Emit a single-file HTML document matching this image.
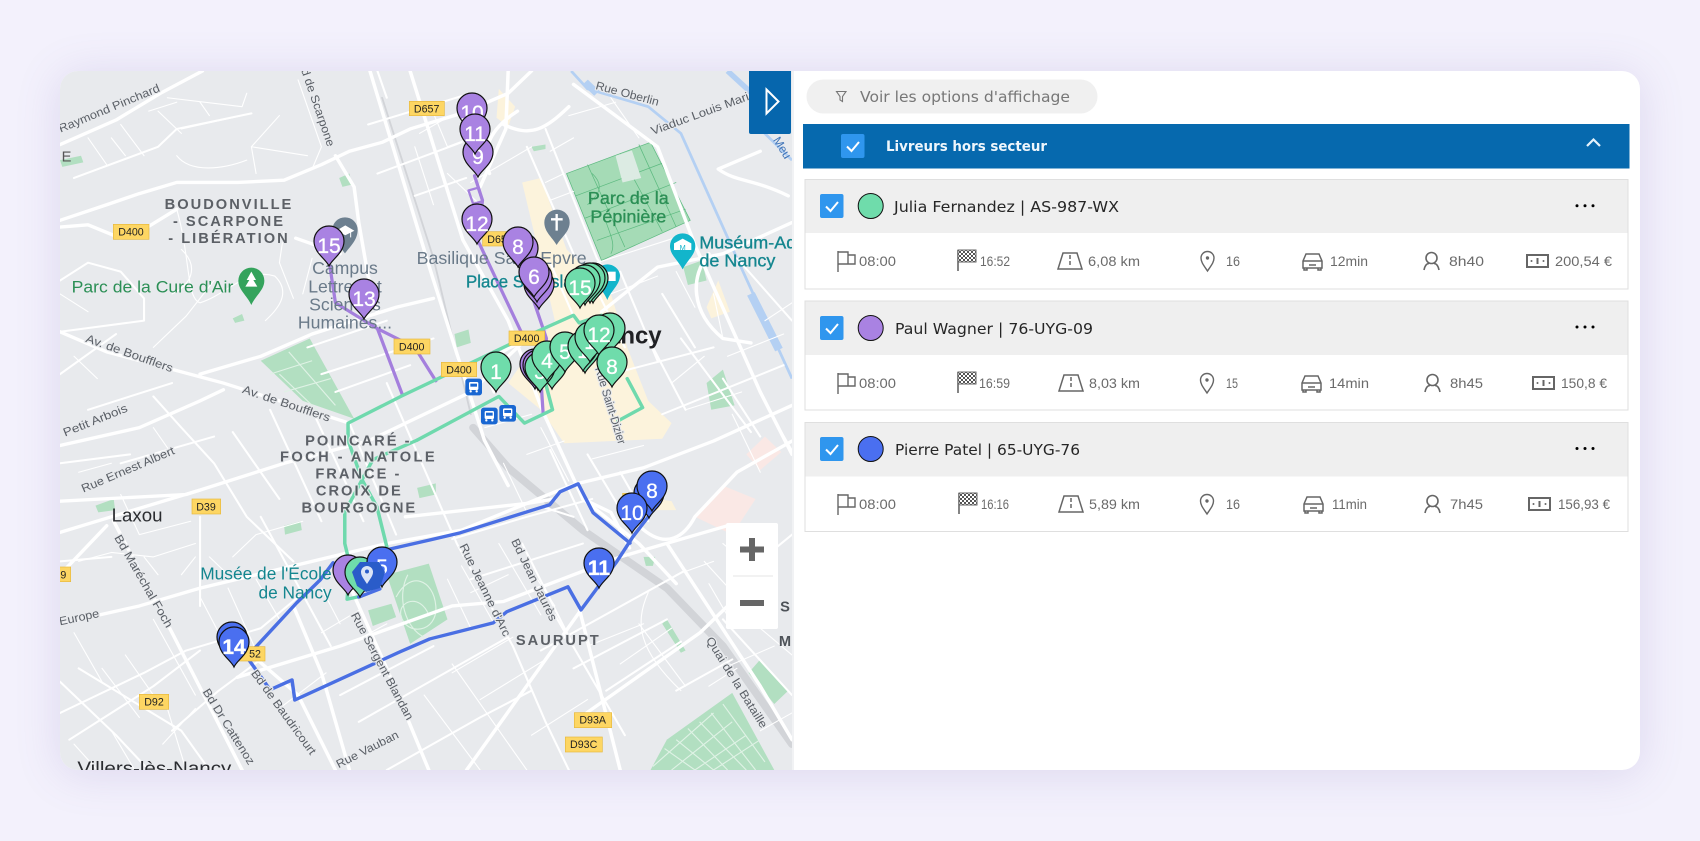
<!DOCTYPE html>
<html lang="fr"><head><meta charset="utf-8"><title>Livreurs</title>
<style>
html,body{margin:0;padding:0;width:1700px;height:841px;overflow:hidden;background:#f3f1fc}
#card{position:absolute;left:60px;top:71px;width:1580px;height:699px;border-radius:18px;background:#fff;box-shadow:0 4px 44px rgba(110,90,170,.17)}
svg{position:absolute;left:0;top:0;filter:blur(.35px)}
.m text,.lbl{font-family:"Liberation Sans",sans-serif}
.ui{font-family:"DejaVu Sans","Liberation Sans",sans-serif}
.rw{fill:none;stroke:#fff;stroke-linejoin:round;stroke-linecap:round}
.a{stroke-width:7.5}.b{stroke-width:4.5}.c{stroke-width:2.4}
.stat{font-family:"Liberation Sans",sans-serif;font-size:14px;fill:#6b6b6b}
.name{font-size:15px;fill:#262626}
.ic{fill:none;stroke:#666;stroke-width:1.4}
.sh{paint-order:stroke;stroke:#e8eaed;stroke-width:7px;stroke-linejoin:round}
.road{font-size:35px;fill:#5a5f66}
.hood{font-size:44px;fill:#4d5258;letter-spacing:6px;font-weight:bold;text-anchor:middle;opacity:.9}
.poi{font-size:53px;fill:#6a7a89}
.teal{font-size:52px;fill:#14868f}
.grn{font-size:50px;fill:#2b8f55}
.shd{fill:#fdd663;stroke:#e6b93f;stroke-width:2}
.shdt{font-size:32px;fill:#222;text-anchor:middle}
.m text{font-size:21px;fill:#fff;text-anchor:middle;stroke:#fff;stroke-width:.3px}
</style></head><body>
<div id="card"></div>
<svg width="1700" height="841" viewBox="0 0 1700 841" xmlns="http://www.w3.org/2000/svg">
<defs>
<clipPath id="mc"><path d="M78 71H792V770H78A18 18 0 0 1 60 752V89A18 18 0 0 1 78 71Z"/></clipPath>
<path id="pin" d="M0 0C-3-7-15-13-15-25A15 15 0 1 1 15-25C15-13 3-7 0 0Z" stroke="#111" stroke-width="1.2"/>
<pattern id="chk" width="4" height="4" patternUnits="userSpaceOnUse"><rect width="4" height="4" fill="#fff"/><rect width="2" height="2" fill="#555"/><rect x="2" y="2" width="2" height="2" fill="#555"/></pattern>
<g id="flag" class="ic"><path d="M1-10V11M1-9H11V3H1M11-6H18V3H11"/></g>
<g id="fin"><path d="M1-11V10" stroke="#666" stroke-width="1.6"/><rect x="1" y="-11" width="18" height="12" fill="url(#chk)" stroke="#666" stroke-width="1"/></g>
<g id="road" class="ic"><path d="M1 8H25L20-8H6ZM13-6V-2M13 0V4" stroke-width="1.5"/></g>
<g id="loc" class="ic"><path d="M0 10C-4 4-6.500 1-6.500-3A6.500 6.500 0 0 1 6.500-3C6.500 1 4 4 0 10Z"/><circle cy="-3" r="1" fill="#666"/></g>
<g id="car" class="ic"><path d="M1 7V0L4-7H17L20 0V7ZM1 0H20M2 7V9H5V7M16 7V9H19V7M7 4H14" stroke-width="1.5"/></g>
<g id="usr" class="ic"><circle cx="8.500" cy="-3" r="5.500" stroke-width="1.6"/><path d="M1 9C2 4 4 2.500 6 2.500M16 9C15 4 13 2.500 11 2.500" stroke-width="1.6"/></g>
<g id="mon"><rect x="1" y="-6" width="21" height="12" fill="none" stroke="#666" stroke-width="2"/><rect x="10.500" y="-3" width="2" height="6" fill="#666"/><circle cx="5.500" r="1" fill="#666"/><circle cx="17.500" r="1" fill="#666"/></g>
<g id="cb"><rect width="23.500" height="24" rx="2" fill="#2f96ee"/><path d="M6 12.500L10.500 17L18 8" fill="none" stroke="#fff" stroke-width="2"/></g>
</defs>

<g clip-path="url(#mc)">
<rect x="60" y="71" width="732" height="699" fill="#e8eaed"/>

<!-- overview coordinate space -->
<g transform="translate(60,71) scale(.46684,.44579)">
<!-- land use -->
<path d="M990 250L1030 240L1085 400L1180 500L1215 620L1260 740L1310 790L1290 825L1080 835L1030 760L960 700L1000 640L1060 560Z" fill="#fcf3dc"/>
<path d="M940 40L975 80L960 125L935 105ZM1385 530L1410 470L1435 540L1395 555ZM1240 955L1310 965L1320 985L1270 985Z" fill="#fcf3dc"/>
<path d="M1360 1000L1420 930L1490 960L1440 1040ZM1470 860L1510 820L1545 855L1500 895Z" fill="#fae8e5"/>
<g fill="#b2dfc1">
<path d="M1085 230L1265 160L1350 335L1160 425Z" fill="#a5dbb6"/>
<path d="M430 650L535 600L630 780L520 740Z"/>
<path d="M700 1130L790 1105L830 1230L750 1285Z"/>
<path d="M1265 1568L1300 1500L1440 1395L1530 1568Z"/>
<path d="M1475 1350L1500 1320L1560 1390L1530 1420Z"/>
<path d="M660 1210L710 1195L720 1225L670 1245ZM76 975L115 960L118 985L82 990ZM480 1020L515 1010L518 1030L482 1040ZM765 935L805 925L805 950L770 958ZM0 200L45 190L50 205L5 215ZM598 240L620 230L625 255L605 260ZM1010 170L1040 165L1040 175L1015 180ZM1385 700L1420 670L1445 750L1395 760ZM1335 440L1375 425L1385 470L1345 480ZM845 590L875 580L880 610L850 620ZM370 555L390 545L395 560L375 565Z"/>
<path d="M1290 1240L1300 1230L1340 1300L1330 1305ZM1250 1090L1275 1090L1270 1110L1255 1110Z"/>
</g>
<!-- pepiniere lines -->
<g fill="none" stroke="#5dba80" stroke-width="1.600">
<path d="M1085 230L1265 160L1350 335L1160 425ZM1130 210L1210 395M1200 185L1290 360M1240 165L1320 350M1105 280L1295 205M1125 330L1320 250M1150 380L1340 310M1140 230C1170 260 1150 280 1130 300M1170 340C1180 370 1190 390 1180 410"/>
</g>
<path d="M1190 190L1225 178L1245 240L1205 250Z" fill="#dcebe3"/>
<!-- park lines -->
<g fill="none" stroke="#dff2e5" stroke-width="2.500">
<path d="M720 1180C750 1120 800 1140 805 1200C810 1260 740 1270 730 1220C725 1190 770 1170 790 1220M745 1130C720 1180 740 1250 780 1270M1270 1560L1400 1440M1310 1568L1440 1460M1360 1568L1470 1490M1320 1500L1400 1568M1370 1460L1470 1568M1420 1420L1510 1550M1295 1520L1360 1568M1345 1475L1430 1568M1395 1440L1490 1568M1400 1568L1500 1500M470 680L560 770M490 630L590 750M450 680L540 650M480 720L580 690"/>
</g>
<!-- water -->
<g fill="none" stroke="#b4d0f3" stroke-linejoin="round">
<path d="M1095 0L1130 40L1260 80L1330 140L1450 420L1568 690" stroke-width="6"/>
<path d="M1125 25L1150 50" stroke-width="16"/>
<path d="M1480 500L1540 625" stroke-width="18"/>
<path d="M1430 0L1482 50" stroke-width="12"/>
<path d="M1500 130L1568 200" stroke-width="6"/>
</g>
<!-- rail -->
<g fill="none" stroke="#d2d4d8" stroke-linejoin="round" stroke-linecap="round">
<path d="M690 60L800 420L880 770" stroke-width="4"/>
<path d="M885 800L960 890L1120 1030L1300 1160L1420 1290L1568 1510" stroke-width="17"/>
</g>
<!-- roads thick -->
<g class="rw a">
<path d="M0 165L120 110L215 50L305 0"/>
<path d="M0 335L100 300L170 275L250 250L380 250L480 245L560 210L620 180L690 160L750 130L860 95L960 50L1010 0"/>
<path d="M0 350L60 345L130 375L180 355L250 310"/>
<path d="M505 375L600 410"/>
<path d="M590 190L630 260L640 340L660 460L680 540"/>
<path d="M664 0L793 446L909 828L960 930"/>
<path d="M750 0L863 379L960 560L1034 763L1120 960L1240 1060L1320 1150"/>
<path d="M960 0L955 130L900 260"/>
<path d="M1100 30L1280 170L1360 390L1500 720L1568 860"/>
<path d="M0 585L100 630L350 700L620 790"/>
<path d="M300 680L430 640L540 590L720 530L800 510"/>
<path d="M0 840L170 800L300 740L350 715"/>
<path d="M0 965L270 950L480 880L660 830L880 720L1000 600"/>
<path d="M0 1240L170 1200L300 1160L580 1090L700 1060L860 1030L1070 940L1110 925L1250 890L1400 830L1568 750"/>
<path d="M115 1010L240 1260L390 1568"/>
<path d="M0 1035L110 1000L300 940"/>
<path d="M100 1020L0 1130"/>
<path d="M610 1130L700 1340L790 1568"/>
<path d="M380 1360L600 1290L840 1200L950 1190L1200 1090L1430 1020"/>
<path d="M400 1300L510 1400L590 1568"/>
<path d="M500 1200L560 1350L620 1568"/>
<path d="M871 1568L1116 1209"/>
<path d="M1113 1209L1200 1568"/>
<path d="M1128 1440L1371 1260L1450 1180"/>
<path d="M980 90C920 130 900 180 920 230M950 120C1010 150 1040 130 1090 80"/>
<path d="M1240 1020C1300 1080 1340 1040 1360 1000L1450 900L1568 830"/>
<path d="M1040 600C950 610 900 650 930 720"/>
<path d="M1220 1070L1180 990L1120 960"/>
<path d="M1160 540L1280 440L1420 410L1568 340"/>
<path d="M1390 410C1350 460 1350 540 1420 600L1480 610M1500 180L1410 220C1450 250 1480 240 1560 280"/>
<path d="M740 1000L1000 970L1060 960"/>
<path d="M1300 1060L1500 1380L1568 1500"/>
</g>
<!-- roads medium -->
<g class="rw b">
<path d="M30 240L210 170L250 130M250 130L410 95"/>
<path d="M0 585L180 560L180 510L130 450L60 430L0 470"/>
<path d="M200 730L260 800L330 880L400 1000L500 1100"/>
<path d="M0 1440L180 1350L270 1300L430 1250L510 1180"/>
<path d="M240 1480L340 1390L430 1320"/>
<path d="M0 1370L120 1490L190 1568"/>
<path d="M20 1500L200 1380L300 1300"/>
<path d="M40 1340L260 1480L320 1568"/>
<path d="M300 1000L300 1200M430 1000L580 1290"/>
<path d="M700 700L800 940L850 1060L970 1290L1040 1460L1090 1568"/>
<path d="M990 1060L1100 1290M1060 1220L1210 1490"/>
<path d="M600 1400L800 1290M640 1460L960 1270M700 1568L900 1450L1010 1390"/>
<path d="M1030 1300L1340 1120M1100 1340L1300 1230M1170 1390L1330 1280"/>
<path d="M840 1050L1000 1000L1140 960M880 1140L1120 1060"/>
<path d="M0 680L120 590M60 760L240 700M130 880L330 820M0 880L150 860"/>
<path d="M370 810L470 960M450 760L560 1010M540 760L650 1010M620 790L720 1040"/>
<path d="M530 620L700 560M560 680L800 600M590 720L750 660"/>
<path d="M660 120L880 50M680 230L860 160M760 280L870 240M700 60L680 0"/>
<path d="M1040 130L1150 420L1180 470M1000 170L1100 410"/>
<path d="M1050 430L1100 550M1140 470L1210 620M1200 450L1280 650"/>
<path d="M1180 680L1400 620M1290 770L1550 660M1330 600L1480 810M1450 420L1568 560"/>
<path d="M1290 500L1360 620M1260 600L1340 760M1420 690L1500 820"/>
<path d="M1050 850L1130 1030M1130 860L1210 1000M1200 900L1260 1010"/>
<path d="M1040 980L1100 1000M0 1100L110 1090"/>
<path d="M1420 1230L1568 1400M1440 1150L1568 1040M1320 1390L1440 1320"/>
</g>
<!-- roads thin -->
<g class="rw c">
<path d="M60 150L100 210M110 150L140 190M130 120L180 190M190 90L250 70M210 90L260 140M230 60L390 80L400 50M300 70L320 100M260 130L390 100"/>
<path d="M470 100L410 170L420 230M510 20L560 170L540 220M410 170L530 190M250 190C280 230 350 220 400 200"/>
<path d="M250 310C280 420 270 510 300 520C360 500 400 440 460 460C500 500 460 540 440 560"/>
<path d="M260 400C300 440 280 480 240 500M330 470L270 550L200 620M480 360L470 430L500 510M540 420L520 500"/>
<path d="M0 500L60 540M30 640L80 690M200 800L240 860M40 900L110 880M130 950L170 1040L280 1010"/>
<path d="M40 1100L110 1080L200 1090L290 1060M180 1090L210 1130M260 1130L290 1090M320 1090L360 1130M370 1090L420 1040L520 1010"/>
<path d="M300 1180L370 1320M360 1160L420 1300M420 1140L470 1230M200 1230L290 1400M140 1310L220 1430M90 1340L170 1450M30 1260L90 1370"/>
<path d="M30 1510L80 1568M110 1480L160 1568M220 1510L290 1430M230 1430L270 1568"/>
<path d="M470 1430L570 1350M600 1240L560 1160M630 1280L700 1240M560 1260L640 1210"/>
<path d="M840 1350L970 1270M900 1410L1040 1320M1010 1490L1130 1410M780 1400L900 1568M840 1330L1000 1568"/>
<path d="M860 1110L930 1240M830 1140L880 1250M940 1060L1030 1220M1010 1120L1060 1200M880 1170L960 1130"/>
<path d="M1240 1240L1340 1380M1260 1170C1230 1240 1240 1300 1330 1390M1130 1290L1250 1240M1200 1330L1310 1250"/>
<path d="M1380 1100L1450 1180M1420 1060L1500 1130M1320 1130L1400 1100M1390 1380L1450 1340M1390 1150L1440 1240"/>
<path d="M1420 1340L1530 1290M1500 1250L1568 1310M1500 1480L1568 1440"/>
<path d="M1400 500L1420 600M1310 700L1380 640M1340 760L1460 720M1440 770L1500 900M1510 560L1568 520M1430 640L1550 590M1530 780L1568 850"/>
<path d="M790 70L830 170L880 150M820 110L770 140M760 170L800 300M830 230L900 300M860 90L880 50"/>
<path d="M1090 100L1190 70M1180 60L1240 150M1100 150L1050 180M1040 250L1080 230M880 250L1010 170"/>
<path d="M1050 290L1100 270M1150 430L1330 370M1180 500L1280 460M1320 450L1360 530"/>
<path d="M1000 860L1080 830M910 800L1010 770M1030 800L1090 920M950 880L1000 990M1140 870L1250 840"/>
</g>
<!-- routes -->
<g fill="none" stroke-linejoin="round" stroke-linecap="round">
<g stroke="#a47fdd" stroke-width="7">
<path d="M577 430L590 520L680 578L760 620L805 695"/>
<path d="M680 578L733 725"/>
<path d="M888 235L905 290L895 380L990 590"/>
<path d="M875 268L895 262L905 292L885 298Z" stroke-width="5"/>
<path d="M1000 470L1042 600L1030 690L1035 770"/>
</g>
<g stroke="#6fd9ad" stroke-width="7.500">
<path d="M617 1090L610 1060L610 990L647 917L617 828V790L730 730L1010 590L1100 548L1112 565L1160 548"/>
<path d="M765 828L670 872L647 917L679 978L700 1067"/>
<path d="M765 828L940 730L995 790L1055 760L1040 700"/>
<path d="M1215 690L1248 755L1195 785"/>
<path d="M617 1160L615 1185L645 1178"/>
</g>
<g stroke="#4a6fe3" stroke-width="7.500">
<path d="M585 1103L557 1142L507 1193L400 1314L450 1388L497 1366L503 1411L728 1303L792 1274L928 1238L957 1213L1088 1157L1116 1209L1191 1103L1227 1045L1263 996"/>
<path d="M700 1074L792 1052L857 1036L1049 973L1071 944L1110 926L1142 991L1221 1059"/>
<path d="M640 1180L685 1162"/>
</g>
</g>
</g>

<!-- q1 labels -->
<g class="lbl" transform="translate(0,40) scale(.33333)">
<text class="road sh" transform="translate(182,278) rotate(-22.600)" textLength="325" lengthAdjust="spacingAndGlyphs">Raymond Pinchard</text>
<text x="185" y="364" font-size="44" fill="#555">E</text>
<text class="road sh" transform="translate(903,90) rotate(71)" textLength="245" lengthAdjust="spacingAndGlyphs">d de Scarpone</text>
<text class="hood sh" x="687" y="507">BOUDONVILLE</text>
<text class="hood sh" x="687" y="558">- SCARPONE</text>
<text class="hood sh" x="687" y="609">- LIBÉRATION</text>
<text class="grn" x="215" y="758" textLength="485" lengthAdjust="spacingAndGlyphs">Parc de la Cure d'Air</text>
<path d="M754 795C740 765 715 750 715 722A39 39 0 0 1 793 722C793 750 768 765 754 795Z" fill="#34a35c"/>
<path d="M754 695L768 720H760L772 740H736L748 720H740Z" fill="#fff"/>
<path d="M1035 640C1020 620 997 600 997 570A38 38 0 0 1 1073 570C1073 600 1050 620 1035 640Z" fill="#6d8090"/>
<path d="M1012 572L1036 558L1060 572L1036 584ZM1052 574V592" fill="#fff" stroke="#fff" stroke-width="3"/>
<g class="poi" text-anchor="middle"><text x="1035" y="702">Campus</text><text x="1035" y="757">Lettres et</text><text x="1035" y="812">Sciences</text><text x="1035" y="866">Humaines...</text></g>
<text class="road sh" transform="translate(255,905) rotate(19.500)" textLength="275" lengthAdjust="spacingAndGlyphs">Av. de Boufflers</text>
<text class="road sh" transform="translate(725,1058) rotate(18.500)" textLength="275" lengthAdjust="spacingAndGlyphs">Av. de Boufflers</text>
<text class="road sh" transform="translate(195,1190) rotate(-22)" textLength="205" lengthAdjust="spacingAndGlyphs">Petit Arbois</text>
<rect class="shd" x="340" y="553" width="107" height="45"/><text class="shdt" x="393" y="586">D400</text>
<rect class="shd" x="1182" y="897" width="108" height="45"/><text class="shdt" x="1235" y="931">D400</text>
</g>
<!-- q2 labels -->
<g class="lbl" transform="translate(400,40) scale(.33333)">
<text class="road sh" transform="translate(585,147) rotate(15)" textLength="195" lengthAdjust="spacingAndGlyphs">Rue Oberlin</text>
<text class="road sh" transform="translate(758,285) rotate(-20)" textLength="310" lengthAdjust="spacingAndGlyphs">Viaduc Louis Mari</text>
<text transform="translate(1118,300) rotate(58)" font-size="36" fill="#3f74b8">Meu</text>
<g class="grn" text-anchor="middle" stroke="#2b8f55" stroke-width="1"><text x="685" y="492" style="font-size:54px">Parc de la</text><text x="685" y="547" style="font-size:54px">Pépinière</text></g>
<path d="M470 615C455 590 433 575 433 547A38 38 0 0 1 509 547C509 575 485 590 470 615Z" fill="#6d8090"/>
<path d="M470 522V572M453 538H488" stroke="#fff" stroke-width="7"/>
<path d="M848 688C834 660 810 645 810 618A38 38 0 0 1 886 618C886 645 862 660 848 688Z" fill="#12b5cb"/>
<path d="M822 610L848 596L874 610V630H822Z" fill="#fff"/><text x="848" y="630" font-size="22" fill="#12b5cb" text-anchor="middle">M</text>
<text class="poi" x="50" y="672" textLength="510" lengthAdjust="spacingAndGlyphs">Basilique Saint-Epvre</text>
<text class="teal" x="198" y="742" stroke="#14868f" stroke-width="1" textLength="345" lengthAdjust="spacingAndGlyphs">Place Stanislas</text>
<path d="M622 780C610 750 585 735 585 705A38 38 0 0 1 660 705C660 735 634 750 622 780Z" fill="#12b5cb"/>
<rect x="615" y="695" width="32" height="28" fill="#fff"/>
<text class="teal" x="898" y="625" stroke="#14868f" stroke-width="1" style="font-size:54px">Muséum-Aquarium</text>
<text class="teal" x="898" y="680" stroke="#14868f" stroke-width="1" style="font-size:54px">de Nancy</text>
<text x="785" y="910" text-anchor="end" font-size="72" font-weight="bold" fill="#202124">Nancy</text>
<text class="road sh" transform="translate(585,985) rotate(73)" textLength="240" lengthAdjust="spacingAndGlyphs">Rue Saint-Dizier</text>
<rect class="shd" x="28" y="184" width="105" height="43"/><text class="shdt" x="80" y="217">D657</text>
<rect class="shd" x="248" y="575" width="105" height="43"/><text class="shdt" x="300" y="609">D657</text>
<rect class="shd" x="327" y="873" width="107" height="43"/><text class="shdt" x="380" y="906">D400</text>
<rect class="shd" x="124" y="967" width="106" height="43"/><text class="shdt" x="177" y="1000">D400</text>
<g fill="#1967d2"><rect x="196" y="1016" width="50" height="50" rx="8"/><rect x="243" y="1103" width="50" height="50" rx="8"/><rect x="298" y="1095" width="50" height="50" rx="8"/></g>
<g fill="#fff"><rect x="207" y="1026" width="28" height="24" rx="4"/><rect x="254" y="1113" width="28" height="24" rx="4"/><rect x="309" y="1105" width="28" height="24" rx="4"/><circle cx="212" cy="1054" r="3.500"/><circle cx="230" cy="1054" r="3.500"/><circle cx="259" cy="1141" r="3.500"/><circle cx="277" cy="1141" r="3.500"/><circle cx="314" cy="1133" r="3.500"/><circle cx="332" cy="1133" r="3.500"/></g>
<g fill="#1967d2"><rect x="211" y="1031" width="20" height="9"/><rect x="258" y="1118" width="20" height="9"/><rect x="313" y="1110" width="20" height="9"/></g>
</g>
<!-- q3 labels -->
<g class="lbl" transform="translate(0,440) scale(.33333)">
<g class="hood"><text class="sh" x="1075" y="17">POINCARÉ -</text><text class="sh" x="1075" y="65" textLength="470">FOCH - ANATOLE</text><text class="sh" x="1075" y="116">FRANCE -</text><text class="sh" x="1078" y="167">CROIX DE</text><text class="sh" x="1078" y="218">BOURGOGNE</text></g>
<text class="road sh" transform="translate(250,158) rotate(-23)" textLength="300" lengthAdjust="spacingAndGlyphs">Rue Ernest Albert</text>
<text x="335" y="245" font-size="56" fill="#2a2c30">Laxou</text>
<text class="road sh" transform="translate(342,293) rotate(60)" textLength="315" lengthAdjust="spacingAndGlyphs">Bd Maréchal Foch</text>
<text class="road sh" transform="translate(180,556) rotate(-12)" textLength="122" lengthAdjust="spacingAndGlyphs">Europe</text>
<text class="teal" x="995" y="419" text-anchor="end">Musée de l'École</text>
<text class="teal" x="995" y="475" text-anchor="end">de Nancy</text>
<text class="road sh" transform="translate(752,700) rotate(54)" textLength="305" lengthAdjust="spacingAndGlyphs">Bd de Baudricourt</text>
<text class="road sh" transform="translate(607,755) rotate(58)" textLength="262" lengthAdjust="spacingAndGlyphs">Bd Dr Cattenoz</text>
<text class="road sh" transform="translate(1052,525) rotate(62)" textLength="360" lengthAdjust="spacingAndGlyphs">Rue Sergent Blandan</text>
<text class="road sh" transform="translate(1016,985) rotate(-27)" textLength="205" lengthAdjust="spacingAndGlyphs">Rue Vauban</text>
<text x="232" y="1003" font-size="56" fill="#2a2c30" textLength="462" lengthAdjust="spacingAndGlyphs">Villers-lès-Nancy</text>
<rect class="shd" x="576" y="177" width="86" height="45"/><text class="shdt" x="618" y="211">D39</text>
<rect class="shd" x="150" y="381" width="62" height="44"/><text class="shdt" x="190" y="415">9</text>
<rect class="shd" x="418" y="763" width="88" height="45"/><text class="shdt" x="462" y="797">D92</text>
<rect class="shd" x="710" y="620" width="85" height="43"/><text class="shdt" x="765" y="653">52</text>
</g>
<!-- q4 labels -->
<g class="lbl" transform="translate(400,440) scale(.33333)">
<text class="road sh" transform="translate(178,318) rotate(64)" textLength="305" lengthAdjust="spacingAndGlyphs">Rue Jeanne d'Arc</text>
<text class="road sh" transform="translate(333,303) rotate(64)" textLength="270" lengthAdjust="spacingAndGlyphs">Bd Jean Jaurès</text>
<text class="hood sh" x="475" y="615">SAURUPT</text>
<text class="road sh" transform="translate(917,600) rotate(58)" textLength="315" lengthAdjust="spacingAndGlyphs">Quai de la Bataille</text>
<text x="1155" y="515" font-size="44" font-weight="bold" fill="#4d5258" text-anchor="middle">S</text>
<text x="1155" y="618" font-size="44" font-weight="bold" fill="#4d5258" text-anchor="middle">M</text>
<rect class="shd" x="523" y="818" width="112" height="45"/><text class="shdt" x="578" y="851">D93A</text>
<rect class="shd" x="496" y="891" width="111" height="45"/><text class="shdt" x="551" y="924">D93C</text>
<rect class="shd" x="668" y="160" width="60" height="40"/>
</g>

<!-- markers -->
<g class="m" fill="#a982e2">
<g transform="translate(329,266)"><use href="#pin"/><text y="-13">15</text></g>
<g transform="translate(364,319)"><use href="#pin"/><text y="-13">13</text></g>
<g transform="translate(472,133)"><use href="#pin"/><text y="-13">10</text></g>
<g transform="translate(478,177)"><use href="#pin"/><text y="-13">9</text></g>
<g transform="translate(475,154)"><use href="#pin"/><text y="-13">11</text></g>
<g transform="translate(477,244)"><use href="#pin"/><text y="-13">12</text></g>
<g transform="translate(523,273)"><use href="#pin"/></g>
<g transform="translate(518,267)"><use href="#pin"/><text y="-13">8</text></g>
<g transform="translate(539,309)"><use href="#pin"/></g>
<g transform="translate(537,302)"><use href="#pin"/></g>
<g transform="translate(534,297)"><use href="#pin"/><text y="-13">6</text></g>
<g transform="translate(535,389)"><use href="#pin"/></g>
<g transform="translate(538,390)"><use href="#pin"/></g>
</g>
<g class="m" fill="#6fdcab">
<g transform="translate(593,303)"><use href="#pin"/></g>
<g transform="translate(590,303)"><use href="#pin"/></g>
<g transform="translate(585,305)"><use href="#pin"/></g>
<g transform="translate(580,308)"><use href="#pin"/><text y="-13">15</text></g>
<g transform="translate(496,392)"><use href="#pin"/><text y="-13">1</text></g>
<g transform="translate(552,389)"><use href="#pin"/></g>
<g transform="translate(540,392)"><use href="#pin"/><text y="-13">3</text></g>
<g transform="translate(547,381)"><use href="#pin"/><text y="-13">4</text></g>
<g transform="translate(565,372)"><use href="#pin"/><text y="-13">5</text></g>
<g transform="translate(585,373)"><use href="#pin"/></g>
<g transform="translate(583,371)"><use href="#pin"/><text y="-13">1</text></g>
<g transform="translate(590,362)"><use href="#pin"/><text y="-13">1</text></g>
<g transform="translate(610,353)"><use href="#pin"/></g>
<g transform="translate(599,355)"><use href="#pin"/><text y="-13">12</text></g>
<g transform="translate(612,387)"><use href="#pin"/><text y="-13">8</text></g>
</g>
<g class="m" fill="#a982e2"><g transform="translate(348,595)"><use href="#pin"/></g></g>
<g class="m" fill="#6fdcab"><g transform="translate(360,597)"><use href="#pin"/></g></g>
<g class="m" fill="#4a6ff0">
<g transform="translate(382,587)"><use href="#pin"/><text y="-13">5</text></g>
<g transform="translate(232,662)"><use href="#pin"/></g>
<g transform="translate(234,667)"><use href="#pin"/><text y="-13" font-weight="bold">14</text></g>
<g transform="translate(649,518)"><use href="#pin"/></g>
<g transform="translate(652,511)"><use href="#pin"/><text y="-13">8</text></g>
<g transform="translate(632,533)"><use href="#pin"/><text y="-13">10</text></g>
<g transform="translate(599,588)"><use href="#pin"/><text y="-13" font-weight="bold">11</text></g>
</g>
<path d="M360 562H379L385 572L380 588L366 592L357 586L352 572Z" fill="#2a5cc9"/>
<path d="M367 584C364 579 361 576 361 572A6 6 0 0 1 373 572C373 576 370 579 367 584Z" fill="#dbe4f6"/><circle cx="367" cy="571.500" r="2" fill="#2a5cc9"/>

<!-- zoom control -->
<rect x="726" y="523" width="52" height="106" rx="2" fill="#fff"/>
<rect x="733" y="575.500" width="40" height="1" fill="#e6e6e6"/>
<path d="M752 538V561M740 549.500H764M740 603H764" stroke="#666" stroke-width="6" fill="none"/>
</g>

<!-- toggle -->
<path d="M749 71H791V132a2 2 0 0 1-2 2H751a2 2 0 0 1-2-2Z" fill="#0666ad"/>
<path d="M766.500 89.500L778.500 101.500L766.500 113.500Z" fill="none" stroke="#fff" stroke-width="2"/>
<rect x="792" y="71" width="2" height="699" fill="#f1f2f4"/>

<!-- right panel -->
<g class="ui">
<rect x="806.500" y="79.500" width="291" height="34" rx="17" fill="#f0f0f0"/>
<path d="M836.500 91.500H846L842.500 96.500V101.500L840 100V96.500Z" fill="none" stroke="#777" stroke-width="1.100"/>
<text x="860" y="102" font-size="15" fill="#777" textLength="210" lengthAdjust="spacingAndGlyphs">Voir les options d'affichage</text>

<rect x="803" y="124" width="826.500" height="44.500" fill="#0669ae"/>
<use href="#cb" x="841" y="134"/>
<text x="886" y="151" font-size="14" font-weight="bold" fill="#eef6fc" textLength="161" lengthAdjust="spacingAndGlyphs">Livreurs hors secteur</text>
<path d="M1587 146L1593.500 139.500L1600 146" fill="none" stroke="#e6f3fc" stroke-width="2.200"/>

<!-- card 1 -->
<g>
<rect x="805" y="179.500" width="823" height="109.500" fill="#fff" stroke="#dfdfdf"/>
<rect x="805.500" y="180" width="822" height="53" fill="#efefef"/>
<use href="#cb" x="820" y="194"/>
<circle cx="870.700" cy="206" r="12.500" fill="#6fdcab" stroke="#111"/>
<text class="name" x="894" y="212" textLength="225" lengthAdjust="spacingAndGlyphs">Julia Fernandez | AS-987-WX</text>
<circle cx="1577" cy="205.700" r="1.500"/><circle cx="1585" cy="205.700" r="1.500"/><circle cx="1593" cy="205.700" r="1.500"/>
<use href="#flag" x="837" y="261"/><text class="stat" x="859" y="266" textLength="37" lengthAdjust="spacingAndGlyphs">08:00</text>
<use href="#fin" x="957" y="261"/><text class="stat" x="980" y="266" textLength="30" lengthAdjust="spacingAndGlyphs">16:52</text>
<use href="#road" x="1057" y="261"/><text class="stat" x="1088" y="266" textLength="52" lengthAdjust="spacingAndGlyphs">6,08 km</text>
<use href="#loc" x="1207.500" y="261"/><text class="stat" x="1226" y="266" textLength="14" lengthAdjust="spacingAndGlyphs">16</text>
<use href="#car" x="1302" y="261"/><text class="stat" x="1330" y="266" textLength="38" lengthAdjust="spacingAndGlyphs">12min</text>
<use href="#usr" x="1423" y="261"/><text class="stat" x="1449" y="266" textLength="35" lengthAdjust="spacingAndGlyphs">8h40</text>
<use href="#mon" x="1526" y="261"/><text class="stat" x="1555" y="266" textLength="57" lengthAdjust="spacingAndGlyphs">200,54 €</text>
</g>
<!-- card 2 -->
<g>
<rect x="805" y="301" width="823" height="109" fill="#fff" stroke="#dfdfdf"/>
<rect x="805.500" y="301.500" width="822" height="53.500" fill="#efefef"/>
<use href="#cb" x="820" y="316"/>
<circle cx="870.700" cy="328" r="12.500" fill="#a982e2" stroke="#111"/>
<text class="name" x="895" y="334" textLength="198" lengthAdjust="spacingAndGlyphs">Paul Wagner | 76-UYG-09</text>
<circle cx="1577" cy="327" r="1.500"/><circle cx="1585" cy="327" r="1.500"/><circle cx="1593" cy="327" r="1.500"/>
<use href="#flag" x="837" y="383"/><text class="stat" x="859" y="388" textLength="37" lengthAdjust="spacingAndGlyphs">08:00</text>
<use href="#fin" x="957" y="383"/><text class="stat" x="979" y="388" textLength="31" lengthAdjust="spacingAndGlyphs">16:59</text>
<use href="#road" x="1058" y="383"/><text class="stat" x="1089" y="388" textLength="51" lengthAdjust="spacingAndGlyphs">8,03 km</text>
<use href="#loc" x="1207" y="383"/><text class="stat" x="1226" y="388" textLength="12" lengthAdjust="spacingAndGlyphs">15</text>
<use href="#car" x="1301" y="383"/><text class="stat" x="1329" y="388" textLength="40" lengthAdjust="spacingAndGlyphs">14min</text>
<use href="#usr" x="1424" y="383"/><text class="stat" x="1450" y="388" textLength="33" lengthAdjust="spacingAndGlyphs">8h45</text>
<use href="#mon" x="1532" y="383"/><text class="stat" x="1561" y="388" textLength="46" lengthAdjust="spacingAndGlyphs">150,8 €</text>
</g>
<!-- card 3 -->
<g>
<rect x="805" y="422.500" width="823" height="109" fill="#fff" stroke="#dfdfdf"/>
<rect x="805.500" y="423" width="822" height="53.500" fill="#efefef"/>
<use href="#cb" x="820" y="437"/>
<circle cx="870.700" cy="449" r="12.500" fill="#4a6ff0" stroke="#111"/>
<text class="name" x="895" y="455" textLength="185" lengthAdjust="spacingAndGlyphs">Pierre Patel | 65-UYG-76</text>
<circle cx="1577" cy="448.500" r="1.500"/><circle cx="1585" cy="448.500" r="1.500"/><circle cx="1593" cy="448.500" r="1.500"/>
<use href="#flag" x="837" y="504"/><text class="stat" x="859" y="509" textLength="37" lengthAdjust="spacingAndGlyphs">08:00</text>
<use href="#fin" x="958" y="504"/><text class="stat" x="981" y="509" textLength="28" lengthAdjust="spacingAndGlyphs">16:16</text>
<use href="#road" x="1058" y="504"/><text class="stat" x="1089" y="509" textLength="51" lengthAdjust="spacingAndGlyphs">5,89 km</text>
<use href="#loc" x="1207" y="504"/><text class="stat" x="1226" y="509" textLength="14" lengthAdjust="spacingAndGlyphs">16</text>
<use href="#car" x="1303" y="504"/><text class="stat" x="1332" y="509" textLength="35" lengthAdjust="spacingAndGlyphs">11min</text>
<use href="#usr" x="1424" y="504"/><text class="stat" x="1450" y="509" textLength="33" lengthAdjust="spacingAndGlyphs">7h45</text>
<use href="#mon" x="1528" y="504"/><text class="stat" x="1558" y="509" textLength="52" lengthAdjust="spacingAndGlyphs">156,93 €</text>
</g>
</g>
</svg>
</body></html>
